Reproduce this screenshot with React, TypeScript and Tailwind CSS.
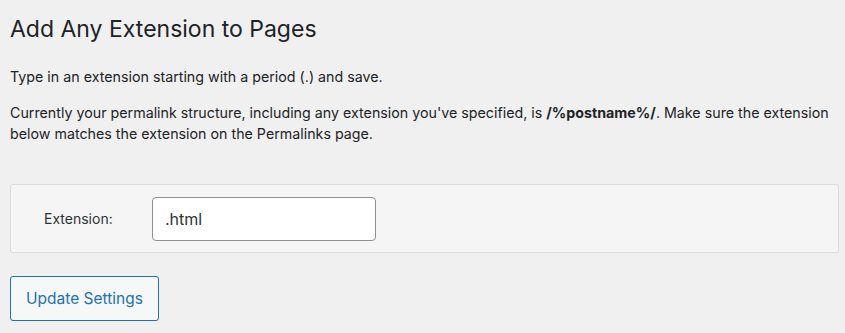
export default function App() {
  return (
    <div className="min-h-[333px] w-[845px] bg-[#f0f0f1] px-[10px] pt-[15px] text-[#1d2327]" style={{ fontFamily: 'Inter, "Noto Sans", sans-serif' }}>
      <h1 className="text-[23px] leading-[29px] font-normal">Add Any Extension to Pages</h1>
      <p className="mt-[22px] text-[14.25px] leading-[21px]">Type in an extension starting with a period (.) and save.</p>
      <p className="mt-[15px] pr-[6px] text-[14.25px] leading-[21px]">
        Currently your permalink structure, including any extension you've specified, is{' '}
        <strong className="font-bold">/%postname%/</strong>. Make sure the extension below matches the extension on the Permalinks page.
      </p>
      <div className="mt-[40px] flex h-[69px] w-[829px] items-center rounded-[3px] border border-[#dcdcde] bg-[#f5f5f5]">
        <label className="w-[141px] pl-[33px] text-[14px] text-[#2c3338]">Extension:</label>
        <input
          defaultValue=".html"
          className="h-[44px] w-[224px] rounded-[4px] border border-[#8c8f94] bg-white px-[12px] text-[16px] text-[#2c3338] outline-none"
        />
      </div>
      <button className="mt-[23px] h-[45px] w-[149px] rounded-[3px] border border-[#2271b1] bg-[#f6f7f7] text-[15.5px] text-[#2271b1]">
        Update Settings
      </button>
    </div>
  );
}
